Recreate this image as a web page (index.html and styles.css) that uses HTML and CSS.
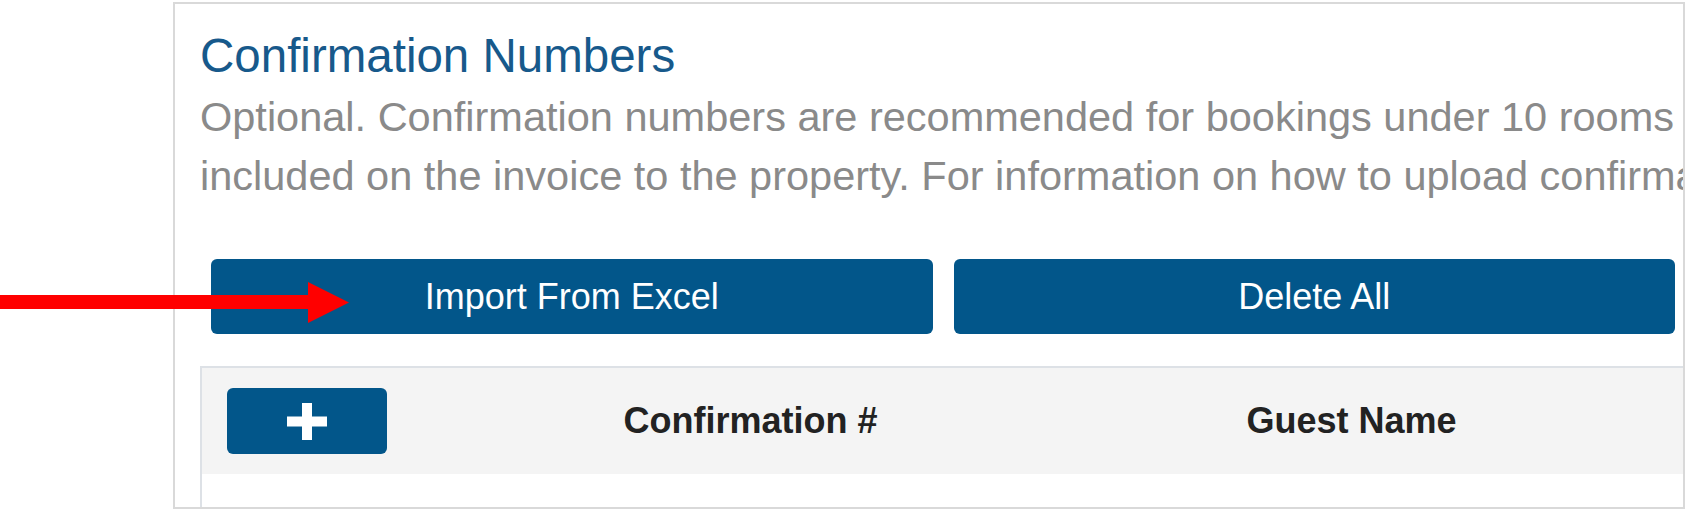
FILE: index.html
```html
<!DOCTYPE html>
<html>
  <head>
    <title>Confirmation Numbers</title>
    <link rel="stylesheet" href="styles.css">
  </head>
  <body>
    <div class="panel">
      <div class="panel-body">
        <h2 class="panel-title">Confirmation Numbers</h2>
        <p class="panel-help">
          <span>Optional. Confirmation numbers are recommended for bookings under 10 rooms or for bookings with a rooming list and are</span>
          <span>included on the invoice to the property. For information on how to upload confirmation numbers, please see the help guide.</span>
        </p>

        <div class="button-row">
          <button type="button" class="btn">Import From Excel</button>
          <button type="button" class="btn">Delete All</button>
        </div>

        <div class="conf-table">
          <div class="conf-head">
            <div class="cell cell-add">
              <button type="button" class="btn-add" title="Add">
                <svg width="40" height="37" viewBox="0 0 40 37">
                  <rect x="15" y="0" width="10" height="37" fill="#fff"/>
                  <rect x="0" y="13.5" width="40" height="10" fill="#fff"/>
                </svg>
              </button>
            </div>
            <div class="cell">Confirmation #</div>
            <div class="cell">Guest Name</div>
            <div class="cell"></div>
          </div>
          <div class="conf-row"></div>
        </div>
      </div>
    </div>

    <!-- pointer drawn over the page -->
    <svg class="arrow" width="350" height="42" viewBox="0 0 350 42">
      <rect x="0" y="13" width="310" height="14" fill="#ff0000"/>
      <polygon points="308,0 349,20.5 308,41" fill="#ff0000"/>
    </svg>
  </body>
</html>
```

FILE: styles.css
```css
body {
  margin: 0;
  background-color: #fff;
  font-family: "Liberation Sans", Arial, sans-serif;
}

/* Panel */
.panel {
  margin: 2px 0 0 173px;
  width: 1512px;
  height: 507px;
  box-sizing: border-box;
  padding: 25px 0 0 25px;
  border: 2px solid #d9d9d9;
  overflow: hidden;
}

.panel-body {
  width: 1486px;
}

.panel-title {
  margin: 0;
  font-size: 47.5px;
  line-height: 54px;
  font-weight: normal;
  color: #17598b;
}

.panel-help {
  margin: 4px 0 0;
  font-size: 41.5px;
  line-height: 59px;
  color: #8a8a8a;
  white-space: nowrap;
}

.panel-help span {
  display: block;
}

/* Buttons */
.button-row {
  display: flex;
  gap: 21px;
  margin-top: 54px;
  padding: 0 11px;
}

.btn {
  flex: 1;
  height: 75px;
  padding: 0;
  background-color: #02568a;
  color: #fff;
  border: none;
  border-radius: 6px;
  font-family: "Liberation Sans", Arial, sans-serif;
  font-size: 36px;
  cursor: pointer;
}

/* Table */
.conf-table {
  margin-top: 32px;
  border-top: 2px solid #dde1e6;
  border-left: 2px solid #dde1e6;
}

.conf-head {
  display: grid;
  grid-template-columns: 248px 601px 601px 1fr;
  align-items: center;
  height: 106px;
  background-color: #f4f4f4;
}

.cell {
  text-align: center;
  font-size: 36px;
  font-weight: bold;
  color: #222;
}

.cell-add {
  display: flex;
  padding-left: 25px;
}

.btn-add {
  display: flex;
  align-items: center;
  justify-content: center;
  width: 160px;
  height: 66px;
  padding: 0;
  background-color: #02568a;
  border: none;
  border-radius: 6px;
  cursor: pointer;
}

.conf-row {
  height: 40px;
  background-color: #fff;
}

/* Red pointer */
.arrow {
  position: absolute;
  left: 0;
  top: 282px;
}
```
